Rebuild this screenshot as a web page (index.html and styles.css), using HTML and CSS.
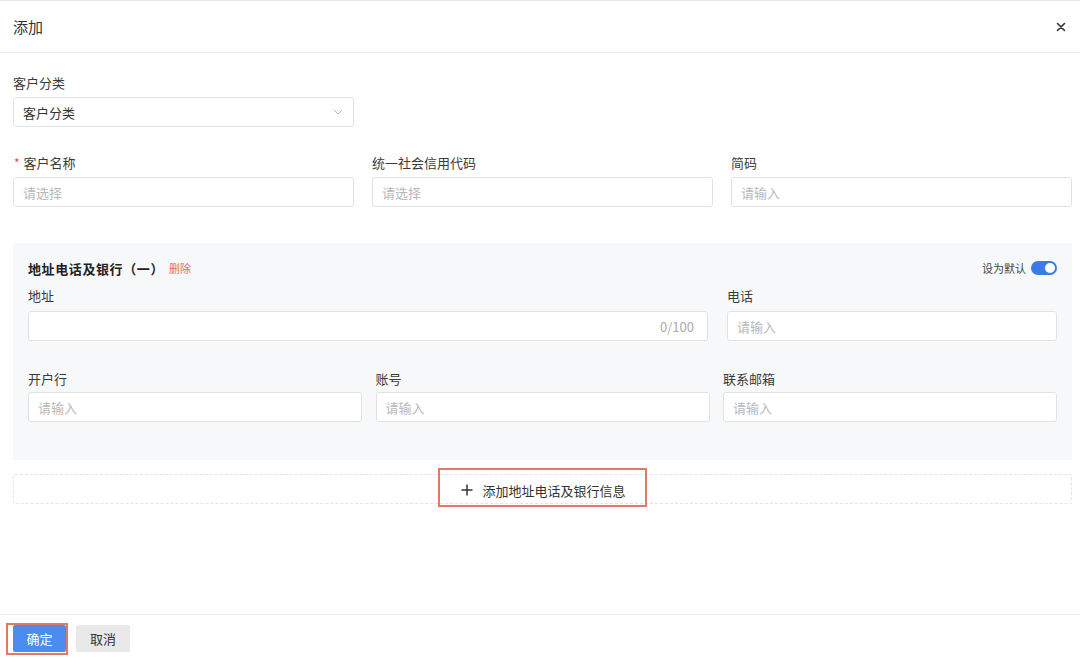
FILE: index.html
```html
<!DOCTYPE html>
<html lang="zh">
<head>
<meta charset="utf-8">
<link rel="stylesheet" href="styles.css">
</head>
<body>
<div class="dialog">
  <div class="header">
    <span class="title">添加</span>
    <svg class="close" width="10" height="10" viewBox="0 0 10 10"><path d="M1.5 1.5L8.5 8.5M8.5 1.5L1.5 8.5" stroke="#333" stroke-width="1.6" stroke-linecap="round"/></svg>
  </div>
  <div class="body">
    <div class="field single">
      <div class="label">客户分类</div>
      <div class="input select"><span class="val">客户分类</span>
        <svg class="chev" width="10" height="6" viewBox="0 0 10 6"><path d="M1 1L5 5L9 1" fill="none" stroke="#b5b5b5" stroke-width="1"/></svg>
      </div>
    </div>
    <div class="row3">
      <div class="field">
        <div class="label"><span class="req">*</span>客户名称</div>
        <div class="input"><span class="ph">请选择</span></div>
      </div>
      <div class="field">
        <div class="label">统一社会信用代码</div>
        <div class="input"><span class="ph">请选择</span></div>
      </div>
      <div class="field">
        <div class="label">简码</div>
        <div class="input"><span class="ph">请输入</span></div>
      </div>
    </div>
    <div class="section">
      <div class="sec-head">
        <span class="sec-title">地址电话及银行（一）</span>
        <span class="del">删除</span>
        <span class="spacer"></span>
        <span class="def">设为默认</span>
        <span class="toggle"><span class="knob"></span></span>
      </div>
      <div class="sec-row1">
        <div class="field">
          <div class="label">地址</div>
          <div class="input count"><span class="ph"></span><span class="cnt">0/100</span></div>
        </div>
        <div class="field">
          <div class="label">电话</div>
          <div class="input"><span class="ph">请输入</span></div>
        </div>
      </div>
      <div class="sec-row2">
        <div class="field">
          <div class="label">开户行</div>
          <div class="input"><span class="ph">请输入</span></div>
        </div>
        <div class="field">
          <div class="label">账号</div>
          <div class="input"><span class="ph">请输入</span></div>
        </div>
        <div class="field">
          <div class="label">联系邮箱</div>
          <div class="input"><span class="ph">请输入</span></div>
        </div>
      </div>
    </div>
    <div class="add-row">
      <span class="add-btn">
        <svg width="12" height="12" viewBox="0 0 12 12"><path d="M6 0.5V11.5M0.5 6H11.5" stroke="#333" stroke-width="1.5"/></svg>
        <span>添加地址电话及银行信息</span>
      </span>
    </div>
  </div>
  <div class="footer">
    <span class="btn primary">确定</span>
    <span class="btn cancel">取消</span>
  </div>
</div>
</body>
</html>
```
FILE: styles.css
```css
* { box-sizing: border-box; }
html, body { margin: 0; padding: 0; }
body {
  width: 1080px;
  height: 664px;
  background: #fff;
  font-family: "Noto Sans CJK SC", "Noto Sans", sans-serif;
  color: #333;
  overflow: hidden;
}
.dialog {
  height: 664px;
  display: flex;
  flex-direction: column;
  border-top: 1px solid #e6e6e6;
}
.header {
  height: 52px;
  border-bottom: 1px solid #ececec;
  display: flex;
  align-items: center;
  padding: 0 14px 0 13px;
}
.title { font-size: 15px; color: #333; flex: 1; }
.close { display: block; }
.body {
  flex: 1;
  padding: 20px 8px 0 13px;
}
.label {
  font-size: 13px;
  line-height: 20px;
  color: #3a3a3a;
  margin-bottom: 4px;
}
.req { color: #e5503e; margin-right: 4px; margin-left: 1px; font-size: 12px; }
.input {
  height: 30px;
  border: 1px solid #e2e2e2;
  border-radius: 3px;
  background: #fff;
  display: flex;
  align-items: center;
  padding: 0 9px;
  font-size: 13px;
}
.ph { color: #b8b8b8; flex: 1; }
.val { color: #333; flex: 1; }
.single { width: 341px; }
.select .chev { margin-right: 1px; }
.row3 {
  margin-top: 26px;
  display: grid;
  grid-template-columns: 341px 341px 341px;
  column-gap: 18px;
}
.section {
  margin-top: 36px;
  width: 1059px;
  height: 217px;
  background: #f7f8fa;
  padding: 15px 15px 0 15px;
}
.sec-head {
  display: flex;
  align-items: center;
  height: 20px;
}
.sec-title { font-size: 13px; font-weight: bold; color: #222; letter-spacing: 0.6px; }
.del { font-size: 11px; color: #ef6a5a; margin-left: 5px; }
.spacer { flex: 1; }
.def { font-size: 11px; color: #444; margin-right: 5px; }
.toggle {
  width: 26px;
  height: 14px;
  border-radius: 7px;
  background: #3a7be6;
  position: relative;
  display: inline-block;
}
.knob {
  position: absolute;
  right: 2px;
  top: 2px;
  width: 10px;
  height: 10px;
  border-radius: 50%;
  background: #fff;
}
.sec-row1 {
  margin-top: 8px;
  display: grid;
  grid-template-columns: 680px 330px;
  column-gap: 19px;
}
.sec-row1 .label { margin-bottom: 5px; }
.count .cnt { color: #aaa; font-size: 13px; margin-right: 4px; }
.sec-row2 {
  margin-top: 28px;
  display: grid;
  grid-template-columns: 334px 334px 334px;
  column-gap: 13.5px;
}
.sec-row2 .label { margin-bottom: 3px; }
.add-row {
  margin-top: 14px;
  width: 1059px;
  height: 30px;
  border: 1px dashed #e4e4e4;
  border-radius: 2px;
  display: flex;
  justify-content: center;
  align-items: center;
}
.add-btn {
  position: relative;
  display: inline-flex;
  align-items: center;
  gap: 9px;
  font-size: 13px;
  color: #333;
  padding: 0 20px 0 22px;
  height: 30px;
  margin-top: 2px;
}
.add-btn::after {
  content: "";
  position: absolute;
  left: -1px;
  right: -1px;
  top: -7px;
  bottom: -2px;
  border: 2px solid #e07a66;
}
.footer {
  height: 50px;
  border-top: 1px solid #ececec;
  display: flex;
  align-items: flex-start;
  padding: 10px 0 0 13px;
  gap: 10px;
}
.btn {
  height: 27px;
  width: 54px;
  display: inline-flex;
  align-items: center;
  justify-content: center;
  font-size: 13px;
  border-radius: 2px;
}
.primary {
  background: #4b8cf0;
  color: #fff;
  position: relative;
  width: 53px;
}
.primary::after {
  content: "";
  position: absolute;
  left: -7px;
  right: -2px;
  top: -2px;
  bottom: -3px;
  border: 2px solid #e07a66;
}
.cancel { background: #e9e9e9; color: #333; }
```
